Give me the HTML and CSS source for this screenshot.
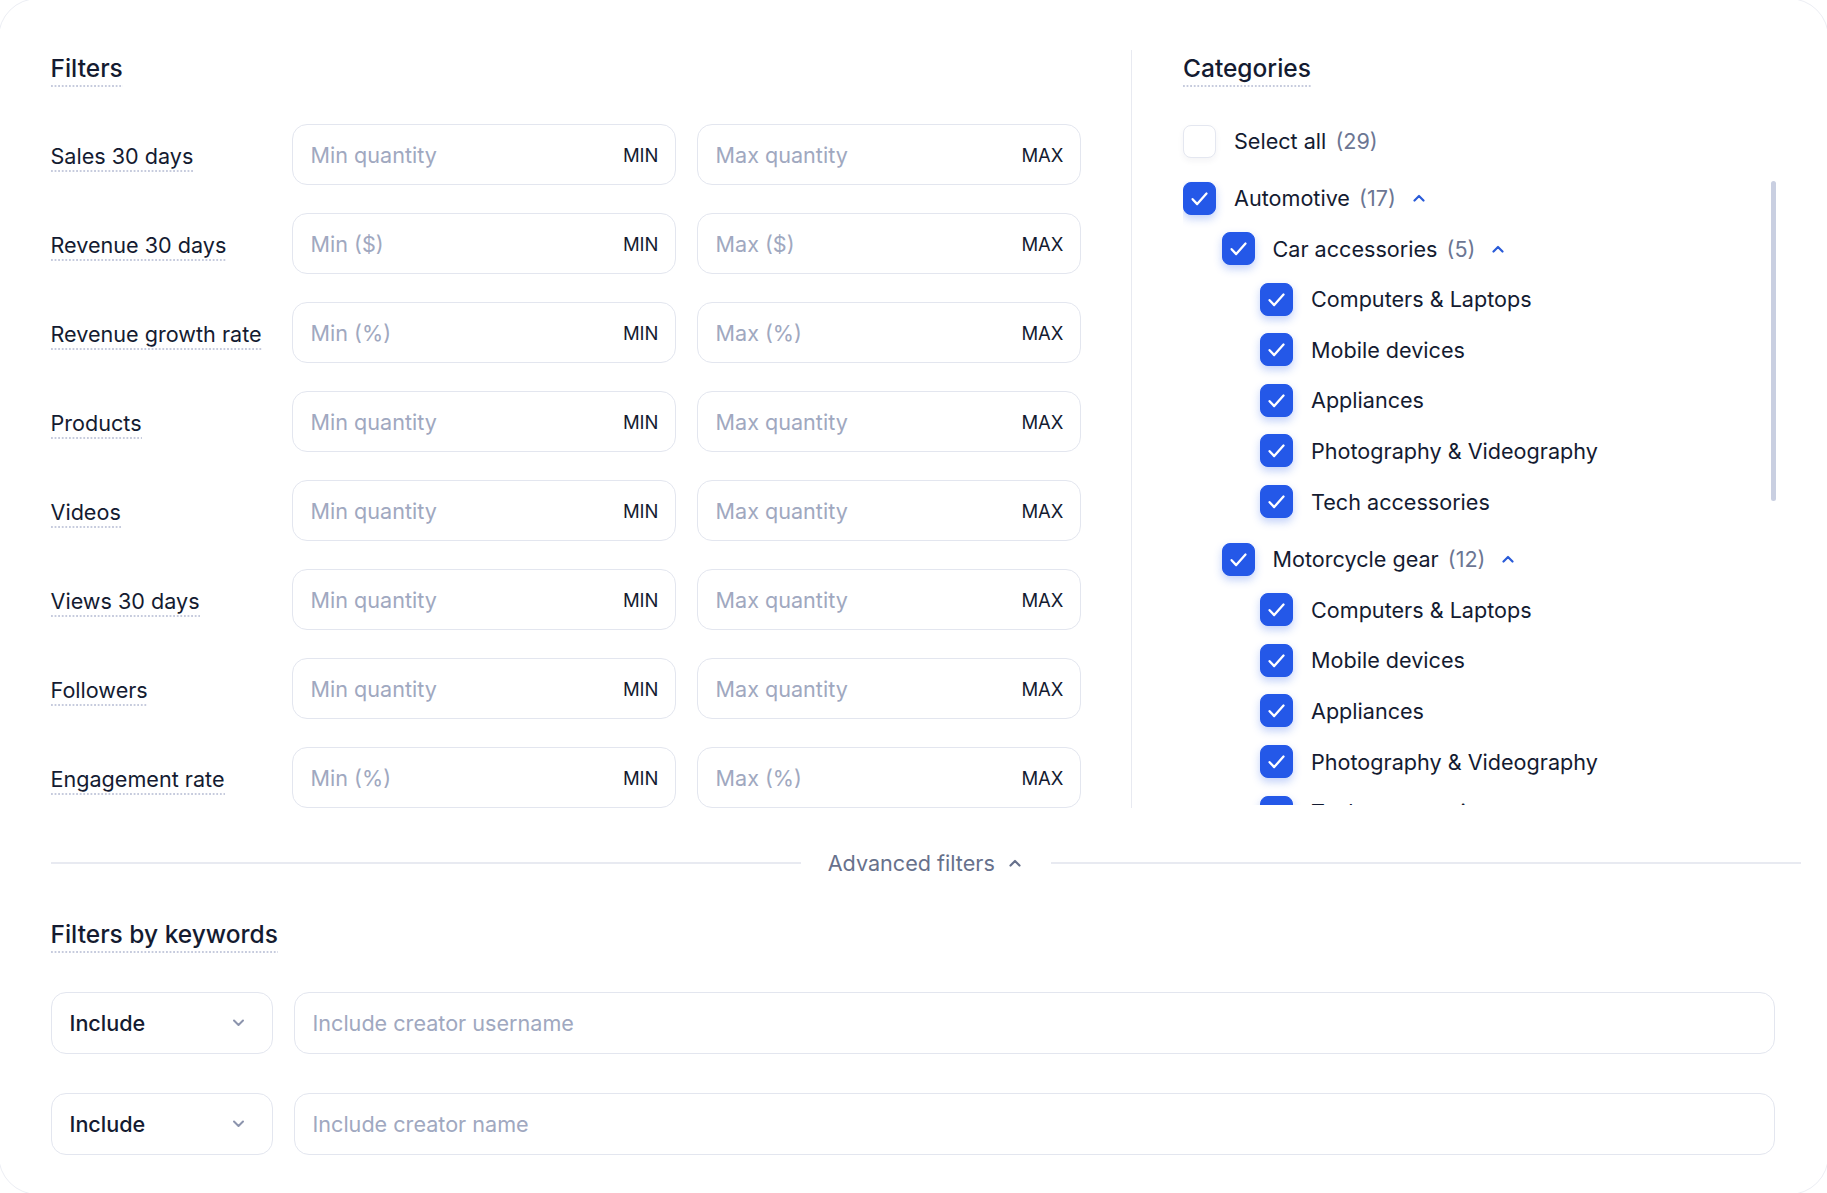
FILE: index.html
```html
<!DOCTYPE html>
<html lang="en">
<head>
    <meta charset="UTF-8">
    <meta name="viewport" content="width=device-width, initial-scale=1.0">
    <title>Filters</title>
    <link rel="stylesheet" href="styles.css">
</head>
<body>
    <div class="card">
        <div class="top">
            <!-- numeric filters -->
            <div class="filters">
                <h2 class="title dotted">Filters</h2>
                <div class="rows">
                    <div class="row">
                        <span class="label dotted">Sales 30 days</span>
                        <div class="range"><span class="ph">Min quantity</span><span class="tag">MIN</span></div>
                        <div class="range"><span class="ph">Max quantity</span><span class="tag">MAX</span></div>
                    </div>
                    <div class="row">
                        <span class="label dotted">Revenue 30 days</span>
                        <div class="range"><span class="ph">Min ($)</span><span class="tag">MIN</span></div>
                        <div class="range"><span class="ph">Max ($)</span><span class="tag">MAX</span></div>
                    </div>
                    <div class="row">
                        <span class="label dotted">Revenue growth rate</span>
                        <div class="range"><span class="ph">Min (%)</span><span class="tag">MIN</span></div>
                        <div class="range"><span class="ph">Max (%)</span><span class="tag">MAX</span></div>
                    </div>
                    <div class="row">
                        <span class="label dotted">Products</span>
                        <div class="range"><span class="ph">Min quantity</span><span class="tag">MIN</span></div>
                        <div class="range"><span class="ph">Max quantity</span><span class="tag">MAX</span></div>
                    </div>
                    <div class="row">
                        <span class="label dotted">Videos</span>
                        <div class="range"><span class="ph">Min quantity</span><span class="tag">MIN</span></div>
                        <div class="range"><span class="ph">Max quantity</span><span class="tag">MAX</span></div>
                    </div>
                    <div class="row">
                        <span class="label dotted">Views 30 days</span>
                        <div class="range"><span class="ph">Min quantity</span><span class="tag">MIN</span></div>
                        <div class="range"><span class="ph">Max quantity</span><span class="tag">MAX</span></div>
                    </div>
                    <div class="row">
                        <span class="label dotted">Followers</span>
                        <div class="range"><span class="ph">Min quantity</span><span class="tag">MIN</span></div>
                        <div class="range"><span class="ph">Max quantity</span><span class="tag">MAX</span></div>
                    </div>
                    <div class="row">
                        <span class="label dotted">Engagement rate</span>
                        <div class="range"><span class="ph">Min (%)</span><span class="tag">MIN</span></div>
                        <div class="range"><span class="ph">Max (%)</span><span class="tag">MAX</span></div>
                    </div>
                </div>
            </div>

            <div class="divider"></div>

            <!-- categories tree -->
            <div class="categories">
                <h2 class="title dotted">Categories</h2>
                <div class="cat-row select-all">
                    <span class="box"></span>
                    <span class="cat-name">Select all <span class="count">(29)</span></span>
                </div>
                <div class="cat-scroll">
                    <div class="scroll-thumb"></div>
                    <div class="cat-list">
                        <div class="cat-row">
                            <span class="box checked"><svg viewBox="0 0 33 33"><path d="M9.6 17.2l4.6 4.9 9.3-10.6"/></svg></span>
                            <span class="cat-name">Automotive <span class="count">(17)</span></span>
                            <svg class="caret" viewBox="0 0 12 8"><path d="M1.5 6.5L6 2l4.5 4.5"/></svg>
                        </div>
                        <div class="children">
                            <div class="cat-row">
                                <span class="box checked"><svg viewBox="0 0 33 33"><path d="M9.6 17.2l4.6 4.9 9.3-10.6"/></svg></span>
                                <span class="cat-name">Car accessories <span class="count">(5)</span></span>
                                <svg class="caret" viewBox="0 0 12 8"><path d="M1.5 6.5L6 2l4.5 4.5"/></svg>
                            </div>
                            <div class="children">
                                <div class="cat-row"><span class="box checked"><svg viewBox="0 0 33 33"><path d="M9.6 17.2l4.6 4.9 9.3-10.6"/></svg></span><span class="cat-name">Computers &amp; Laptops</span></div>
                                <div class="cat-row"><span class="box checked"><svg viewBox="0 0 33 33"><path d="M9.6 17.2l4.6 4.9 9.3-10.6"/></svg></span><span class="cat-name">Mobile devices</span></div>
                                <div class="cat-row"><span class="box checked"><svg viewBox="0 0 33 33"><path d="M9.6 17.2l4.6 4.9 9.3-10.6"/></svg></span><span class="cat-name">Appliances</span></div>
                                <div class="cat-row"><span class="box checked"><svg viewBox="0 0 33 33"><path d="M9.6 17.2l4.6 4.9 9.3-10.6"/></svg></span><span class="cat-name">Photography &amp; Videography</span></div>
                                <div class="cat-row"><span class="box checked"><svg viewBox="0 0 33 33"><path d="M9.6 17.2l4.6 4.9 9.3-10.6"/></svg></span><span class="cat-name">Tech accessories</span></div>
                            </div>
                            <div class="cat-row group">
                                <span class="box checked"><svg viewBox="0 0 33 33"><path d="M9.6 17.2l4.6 4.9 9.3-10.6"/></svg></span>
                                <span class="cat-name">Motorcycle gear <span class="count">(12)</span></span>
                                <svg class="caret" viewBox="0 0 12 8"><path d="M1.5 6.5L6 2l4.5 4.5"/></svg>
                            </div>
                            <div class="children">
                                <div class="cat-row"><span class="box checked"><svg viewBox="0 0 33 33"><path d="M9.6 17.2l4.6 4.9 9.3-10.6"/></svg></span><span class="cat-name">Computers &amp; Laptops</span></div>
                                <div class="cat-row"><span class="box checked"><svg viewBox="0 0 33 33"><path d="M9.6 17.2l4.6 4.9 9.3-10.6"/></svg></span><span class="cat-name">Mobile devices</span></div>
                                <div class="cat-row"><span class="box checked"><svg viewBox="0 0 33 33"><path d="M9.6 17.2l4.6 4.9 9.3-10.6"/></svg></span><span class="cat-name">Appliances</span></div>
                                <div class="cat-row"><span class="box checked"><svg viewBox="0 0 33 33"><path d="M9.6 17.2l4.6 4.9 9.3-10.6"/></svg></span><span class="cat-name">Photography &amp; Videography</span></div>
                                <div class="cat-row"><span class="box checked"><svg viewBox="0 0 33 33"><path d="M9.6 17.2l4.6 4.9 9.3-10.6"/></svg></span><span class="cat-name">Tech accessories</span></div>
                            </div>
                        </div>
                    </div>
                </div>
            </div>
        </div>

        <!-- toggle -->
        <div class="advanced">
            <span class="line"></span>
            <span class="adv-text">Advanced filters
                <svg class="caret gray" viewBox="0 0 12 8"><path d="M1.5 6.5L6 2l4.5 4.5"/></svg>
            </span>
            <span class="line"></span>
        </div>

        <!-- keywords -->
        <h2 class="title dotted kw-title">Filters by keywords</h2>
        <div class="kw-row">
            <div class="select">Include <svg class="down" viewBox="0 0 12 8"><path d="M1.5 1.5L6 6l4.5-4.5"/></svg></div>
            <div class="text-input">Include creator username</div>
        </div>
        <div class="kw-row">
            <div class="select">Include <svg class="down" viewBox="0 0 12 8"><path d="M1.5 1.5L6 6l4.5-4.5"/></svg></div>
            <div class="text-input">Include creator name</div>
        </div>
    </div>
</body>
</html>
```

FILE: styles.css
```css
body {
    margin: 0;
    font-family: Inter, "Noto Sans", sans-serif;
    background-color: #fff;
    color: #141b31;
    overflow: hidden;
}
.card {
    margin: -2px;
    height: calc(100vh + 4px);
    box-sizing: border-box;
    border: 1.5px solid #eceef4;
    border-radius: 40px;
    padding: 51px 27px 0 51.5px;
}
.dotted {
    background-image: linear-gradient(to right, #c6cbdd 1.6px, transparent 1.6px);
    background-size: 3.6px 2px;
    background-repeat: repeat-x;
    background-position: 0 100%;
    padding-bottom: 4px;
}
.title {
    display: inline-block;
    margin: 3px 0 0;
    font-size: 24.5px;
    font-weight: 500;
    line-height: 30px;
}
.top {
    display: flex;
}
.filters {
    width: 1030px;
    flex-shrink: 0;
}
.rows {
    display: flex;
    flex-direction: column;
    gap: 28px;
    margin-top: 37px;
}
.row {
    display: flex;
    align-items: center;
    gap: 21px;
}
.label {
    display: inline-block;
    font-size: 21.6px;
    line-height: 26px;
    padding-top: 5px;
    padding-bottom: 3px;
    margin-right: auto;
}
.range {
    width: 384px;
    height: 61px;
    box-sizing: border-box;
    border: 1.5px solid #e3e6ef;
    border-radius: 15px;
    display: flex;
    align-items: center;
    justify-content: space-between;
    padding: 0 16px 0 18px;
}
.ph {
    font-size: 21.6px;
    color: #a0a8c0;
}
.tag {
    font-size: 18.5px;
    font-weight: 400;
    color: #141b31;
}
.divider {
    width: 1.5px;
    background-color: #e8eaf1;
    margin: 0 51px 0 50px;
}
.categories {
    flex: 1;
    display: flex;
    flex-direction: column;
    align-items: flex-start;
}
.cat-row {
    display: flex;
    align-items: center;
    height: 34px;
}
.select-all {
    margin-top: 37px;
}
.cat-scroll {
    position: relative;
    align-self: stretch;
    margin-top: 23px;
    height: 624px;
    overflow: hidden;
}
.scroll-thumb {
    position: absolute;
    right: 25px;
    top: 0;
    width: 5px;
    height: 320px;
    border-radius: 3px;
    background-color: #c9cfe1;
}
.cat-list,
.children {
    display: flex;
    flex-direction: column;
    gap: 16.6px;
}
.children {
    padding-left: 38.5px;
}
.cat-row.group {
    margin-top: 7px;
}
.box {
    width: 33px;
    height: 33px;
    box-sizing: border-box;
    border-radius: 8px;
    border: 1.5px solid #e4e7f0;
    background: #fff;
    box-shadow: 0 3px 6px rgba(30, 40, 80, 0.05);
    flex-shrink: 0;
    display: flex;
    align-items: center;
    justify-content: center;
}
.box.checked {
    background-color: #2458e8;
    border-color: #2458e8;
    box-shadow: 0 4px 9px rgba(36, 88, 232, 0.28);
}
.box svg {
    width: 33px;
    height: 33px;
    flex-shrink: 0;
    fill: none;
    stroke: #fff;
    stroke-width: 2.3;
    stroke-linecap: round;
    stroke-linejoin: round;
}
.cat-name {
    margin-left: 18px;
    font-size: 21.6px;
    white-space: nowrap;
}
.count {
    color: #6c7693;
    margin-left: 3px;
}
.caret {
    width: 12px;
    height: 8px;
    margin-left: 17px;
    fill: none;
    stroke: #2a5bd8;
    stroke-width: 2.2;
    stroke-linecap: round;
    stroke-linejoin: round;
}
.caret.gray {
    stroke: #67718c;
    margin-left: 14px;
}
.advanced {
    display: flex;
    align-items: center;
    margin-top: 40px;
    height: 30px;
}
.line {
    flex: 1;
    height: 1.5px;
    background-color: #e8eaf1;
}
.adv-text {
    display: flex;
    align-items: center;
    padding: 0 30px 0 27px;
    font-size: 21.6px;
    color: #67718c;
}
.kw-title {
    margin-top: 40.5px;
}
.kw-row {
    display: flex;
    gap: 21px;
    margin-top: 39px;
    padding-right: 26px;
}
.select {
    width: 222px;
    height: 62px;
    box-sizing: border-box;
    border: 1.5px solid #e3e6ef;
    border-radius: 15px;
    display: flex;
    align-items: center;
    justify-content: space-between;
    padding: 0 27px 0 18px;
    font-size: 21.6px;
    font-weight: 500;
}
.down {
    width: 13px;
    height: 8px;
    fill: none;
    stroke: #8c94ad;
    stroke-width: 2;
    stroke-linecap: round;
    stroke-linejoin: round;
}
.text-input {
    flex: 1;
    height: 62px;
    box-sizing: border-box;
    border: 1.5px solid #e3e6ef;
    border-radius: 15px;
    display: flex;
    align-items: center;
    padding: 0 18px;
    font-size: 21.6px;
    color: #a0a8c0;
}
```
